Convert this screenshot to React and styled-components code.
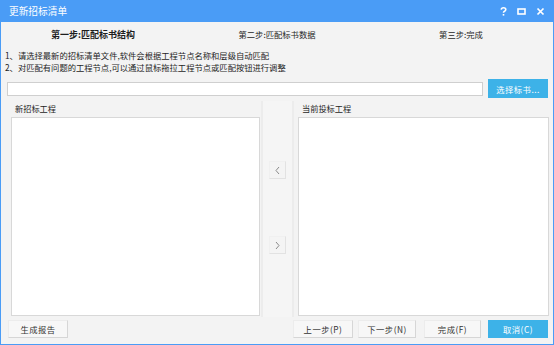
import styled, { createGlobalStyle } from "styled-components";

const GlobalStyle = createGlobalStyle`
	html, body {
		margin: 0;
		padding: 0;
		background: #f3f3f3;
	}
	* {
		box-sizing: border-box;
	}
`;

const Window = styled.div`
	display: flex;
	flex-direction: column;
	width: 554px;
	height: 345px;
	background: #f3f3f3;
	border: 1px solid #4a9cf6;
	border-top: none;
	font-family: "Noto Sans CJK SC", "Noto Sans", sans-serif;
	font-size: 8.3px;
	color: #1e1e1e;
	overflow: hidden;
`;

const TitleBar = styled.div`
	display: flex;
	align-items: center;
	justify-content: space-between;
	height: 22px;
	margin: 0 -1px;
	padding: 0 8px 0 9px;
	background: #4a9cf6;
	color: #fff;
`;

const TitleText = styled.span`
	font-size: 9.7px;
`;

const TitleIcons = styled.div`
	display: flex;
	align-items: center;
	gap: 10px;
	padding-right: 1px;
`;

const Steps = styled.div`
	display: grid;
	grid-template-columns: 1fr 1fr 1fr;
	align-items: center;
	height: 20px;
	margin-top: 2px;
`;

const Step = styled.div`
	text-align: center;
	font-weight: ${(p) => (p.$active ? "bold" : "normal")};
	font-size: ${(p) => (p.$active ? "9px" : "8.3px")};
`;

const Notes = styled.div`
	padding-left: 4px;
	line-height: 12px;
	margin-top: 5px;
`;

const InputRow = styled.div`
	display: flex;
	align-items: center;
	gap: 5px;
	height: 19px;
	margin: 6px 5px 0 6px;
`;

const PathInput = styled.div`
	flex: 1;
	height: 14px;
	background: #fff;
	border: 1px solid #cfcfcf;
`;

const Button = styled.div`
	display: flex;
	align-items: center;
	justify-content: center;
	width: ${(p) => p.$w || 60}px;
	height: ${(p) => p.$h || 18}px;
	margin-left: ${(p) => p.$ml || 0}px;
	background: ${(p) => (p.$primary ? "#3db2e8" : "#f7f7f7")};
	color: ${(p) => (p.$primary ? "#fff" : "#333")};
	border: 1px solid ${(p) => (p.$primary ? "#3db2e8" : "#d6d6d6")};
	border-top-color: ${(p) => (p.$primary ? "#3db2e8" : "#ececec")};
	border-left-color: ${(p) => (p.$primary ? "#3db2e8" : "#ececec")};
	letter-spacing: 0.5px;
`;

const Panels = styled.div`
	display: flex;
	height: 216px;
	margin: 3px 0 0 4px;
`;

const Panel = styled.div`
	display: flex;
	flex-direction: column;
	width: ${(p) => p.$w}px;
	padding: ${(p) => p.$pad};
	${(p) => p.$side}: 2px solid #ececec;
`;

const PanelHeader = styled.div`
	display: flex;
	align-items: center;
	height: 16px;
	padding: 0 0 2px 4px;
	font-size: 8.2px;
`;

const ListBox = styled.div`
	flex: 1;
	background: #fff;
	border: 1px solid #d8d8d8;
	margin-bottom: 1px;
`;

const Splitter = styled.div`
	display: flex;
	flex-direction: column;
	align-items: center;
	width: 29px;
	background: #f5f5f5;
	padding-top: 60px;
	gap: 57px;
`;

const ArrowButton = styled.div`
	display: flex;
	align-items: center;
	justify-content: center;
	width: 17px;
	height: 18px;
	background: #f4f4f4;
	border: 1px solid #e2e2e2;
	border-top-color: #f0f0f0;
	border-left-color: #f0f0f0;
`;

const Footer = styled.div`
	display: flex;
	align-items: center;
	height: 18px;
	margin: 3px 5px 0 7px;
`;

const Spacer = styled.div`
	flex: 1;
`;

function Chevron({ dir }) {
	const pts = dir === "left" ? "5,1 2,4.5 5,8" : "2,1 5,4.5 2,8";
	return (
		<svg width="7" height="9" viewBox="0 0 7 9">
			<polyline points={pts} fill="none" stroke="#8a8a8a" strokeWidth="1" />
		</svg>
	);
}

export default function App() {
	return (
		<>
			<GlobalStyle />
			<Window>
				<TitleBar>
					<TitleText>更新招标清单</TitleText>
					<TitleIcons>
						<svg width="7" height="9" viewBox="0 0 7 9">
							<path d="M1.2 2.6 Q1.4 0.8 3.5 0.8 Q5.8 0.8 5.8 2.6 Q5.8 3.8 4.3 4.4 Q3.5 4.8 3.5 5.8" fill="none" stroke="#fff" strokeWidth="1.6" />
							<rect x="2.7" y="7" width="1.6" height="1.6" fill="#fff" />
						</svg>
						<svg width="9" height="9" viewBox="0 0 9 9">
							<rect x="1" y="2" width="7" height="5" fill="none" stroke="#fff" strokeWidth="1.6" />
						</svg>
						<svg width="9" height="9" viewBox="0 0 9 9">
							<path d="M1.5 1.5 L7.5 7.5 M7.5 1.5 L1.5 7.5" stroke="#fff" strokeWidth="1.7" />
						</svg>
					</TitleIcons>
				</TitleBar>

				<Steps>
					<Step $active>第一步:匹配标书结构</Step>
					<Step>第二步:匹配标书数据</Step>
					<Step>第三步:完成</Step>
				</Steps>

				<Notes>
					<div>1、请选择最新的招标清单文件,软件会根据工程节点名称和层级自动匹配</div>
					<div>2、对匹配有问题的工程节点,可以通过鼠标拖拉工程节点或匹配按钮进行调整</div>
				</Notes>

				<InputRow>
					<PathInput />
					<Button $primary $w={60} $h={19}>选择标书...</Button>
				</InputRow>

				<Panels>
					<Panel $w={258} $pad="0 1px 0 6px" $side="border-right">
						<PanelHeader>新招标工程</PanelHeader>
						<ListBox />
					</Panel>
					<Splitter>
						<ArrowButton>
							<Chevron dir="left" />
						</ArrowButton>
						<ArrowButton>
							<Chevron dir="right" />
						</ArrowButton>
					</Splitter>
					<Panel $w={261} $pad="0 4px 0 4px" $side="border-left">
						<PanelHeader>当前投标工程</PanelHeader>
						<ListBox />
					</Panel>
				</Panels>

				<Footer>
					<Button $w={60}>生成报告</Button>
					<Spacer />
					<Button $w={60}>上一步(P)</Button>
					<Button $w={58} $ml={5}>下一步(N)</Button>
					<Button $w={57} $ml={8}>完成(F)</Button>
					<Button $primary $w={60} $ml={7}>取消(C)</Button>
				</Footer>
			</Window>
		</>
	);
}
